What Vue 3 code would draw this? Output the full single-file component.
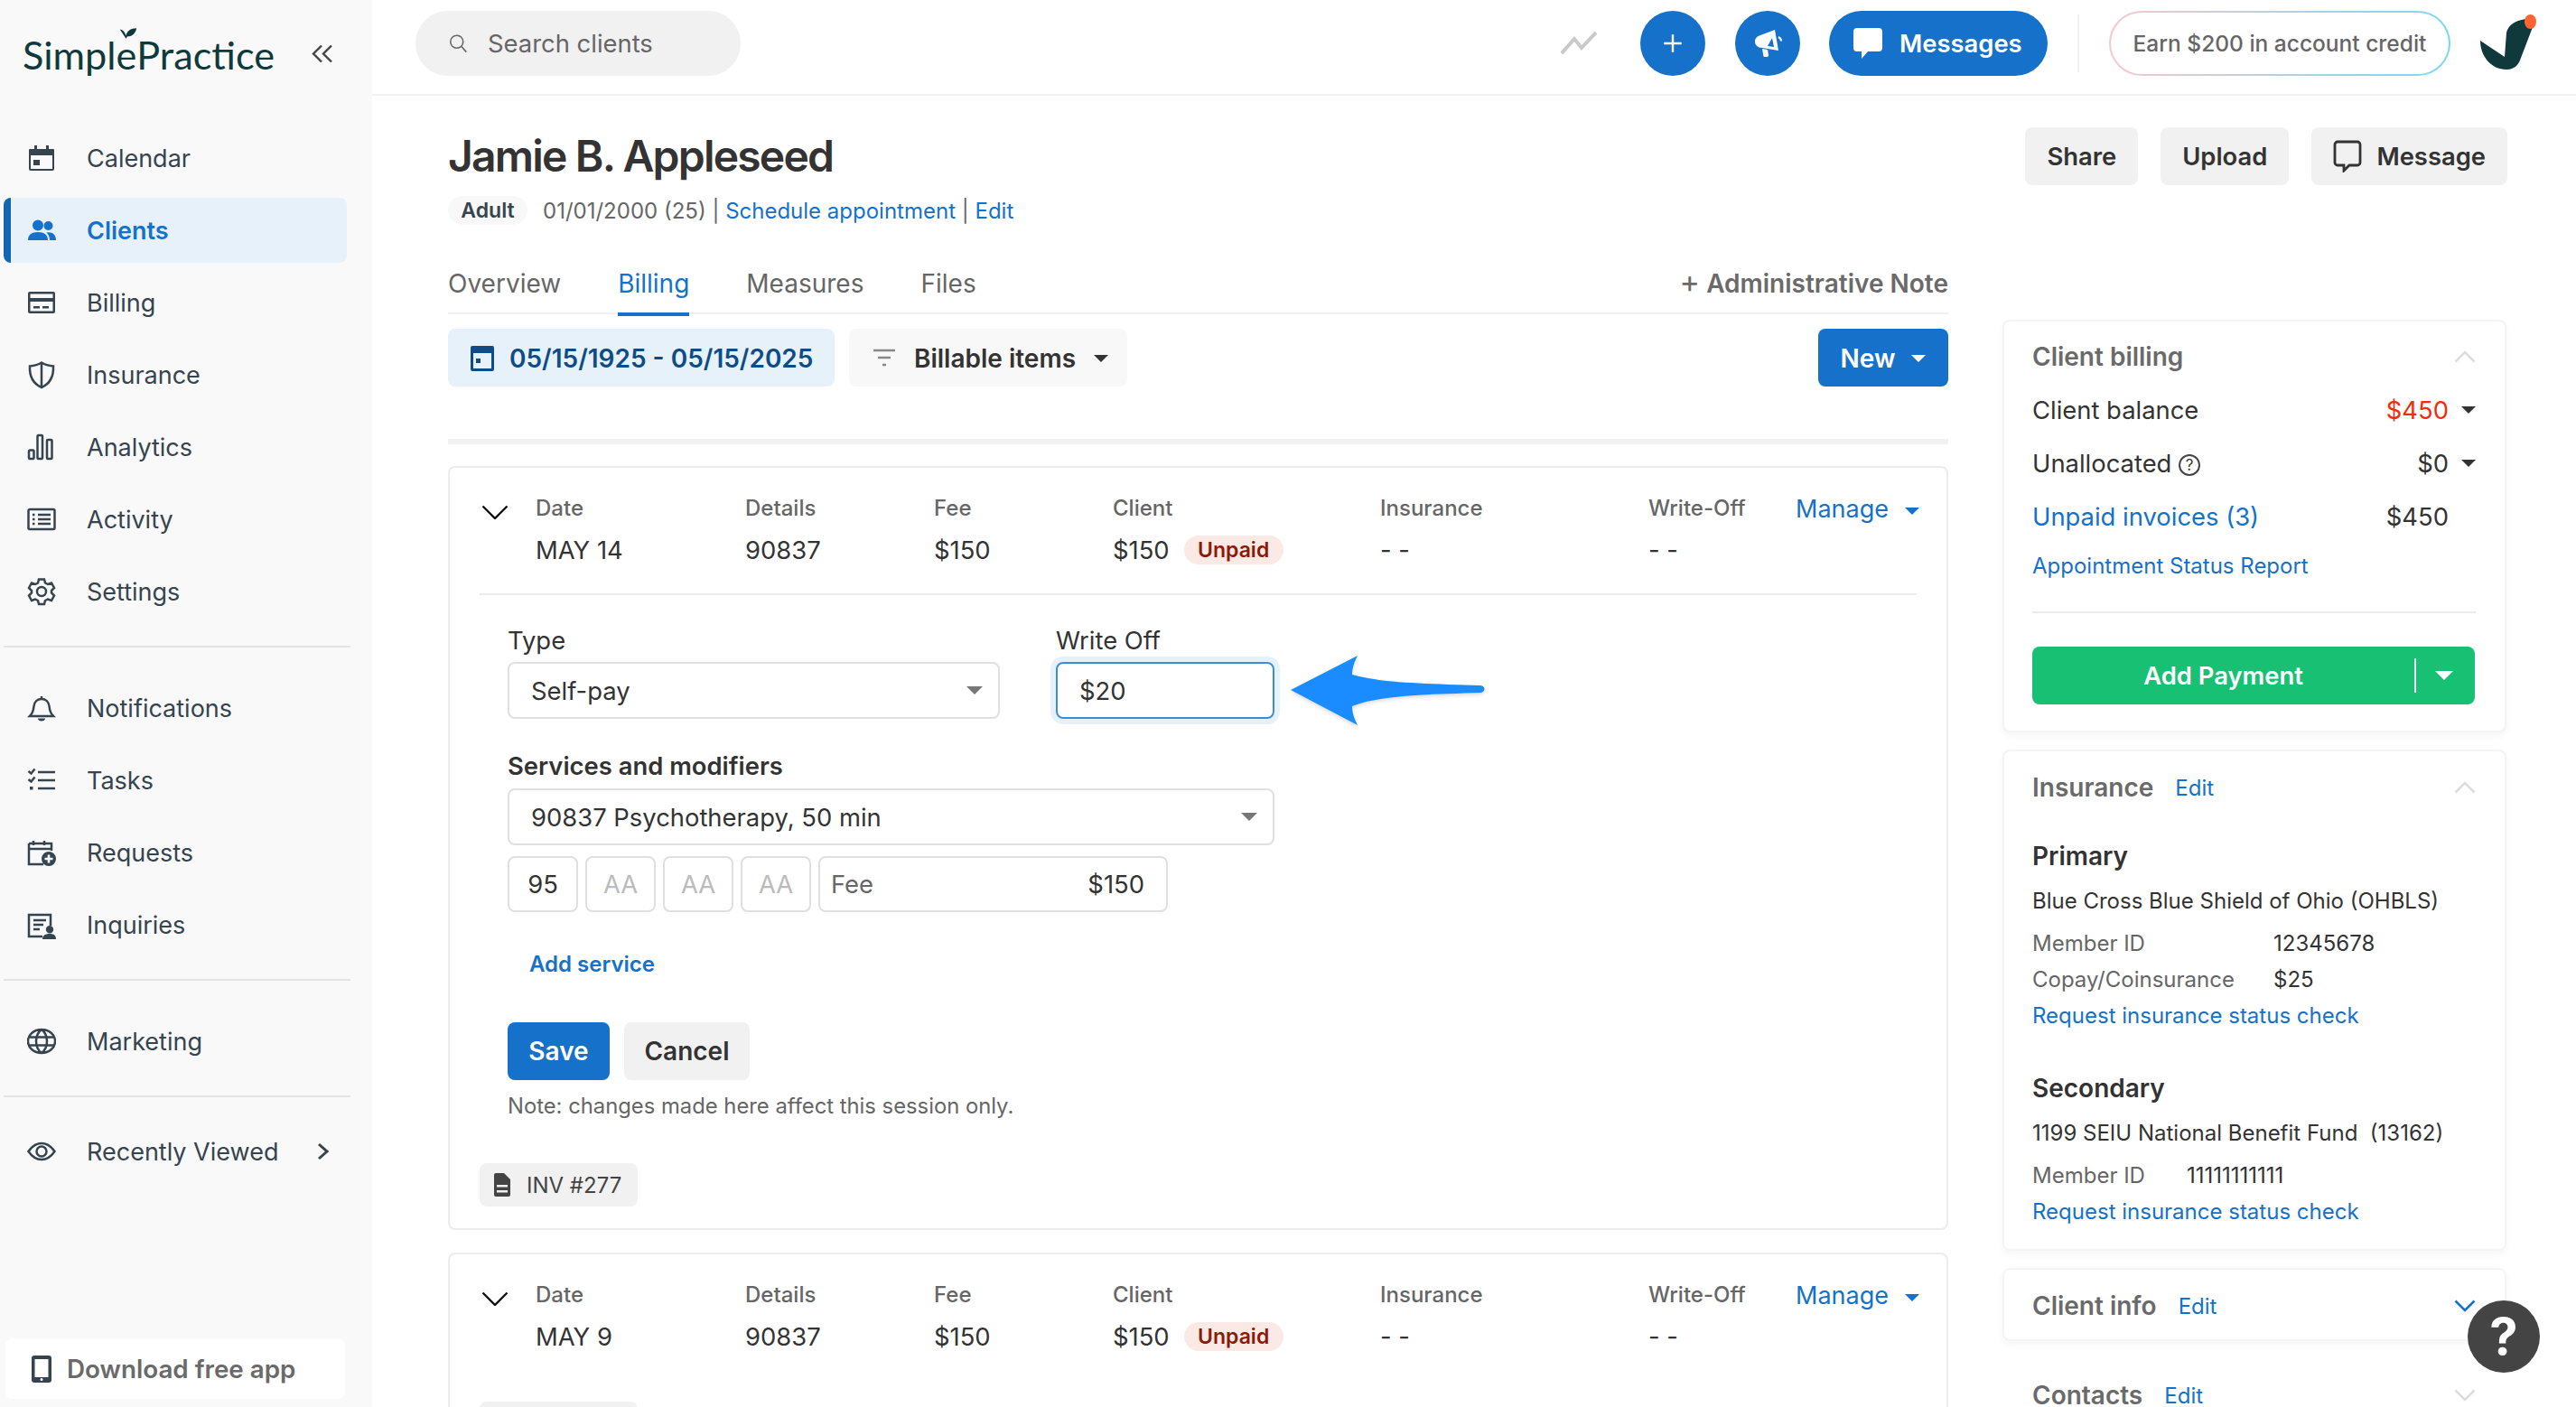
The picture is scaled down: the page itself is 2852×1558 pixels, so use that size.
<script setup>
const navGroups = [
  [
    { label: 'Calendar', icon: [
      { d: 'M3 6h26a1 1 0 0 1 1 1v21a2 2 0 0 1-2 2H4a2 2 0 0 1-2-2V7a1 1 0 0 1 1-1zM4 13v15h24V13z', fill: 1 },
      { d: 'M8 2h3v5H8zM21 2h3v5h-3zM7 18h7v6H7z', fill: 1 }
    ] },
    { label: 'Clients', active: true, icon: [
      { d: 'M12 4.500a6 6 0 1 1 0 12 6 6 0 0 1 0-12zM23.500 6a5 5 0 1 1 0 10 5 5 0 0 1 0-10zM1 27c0-6 4-9 11-9s11 3 11 9zM25 27c0-3.500-1-6-3.500-8.500 6-1.200 10.500 2 10.500 8.500z', fill: 1 }
    ] },
    { label: 'Billing', icon: [
      { d: 'M3 4h26a2 2 0 0 1 2 2v20a2 2 0 0 1-2 2H3a2 2 0 0 1-2-2V6a2 2 0 0 1 2-2zm.5 11v10.500h25V15zm0-8.500V11h25V6.500zM7 20h7v2.500H7zM17 20h7v2.500h-7z', fill: 1 }
    ] },
    { label: 'Insurance', icon: [
      { d: 'M16 2.500c4 2.500 8 3.500 13 4 .5 10-3 19-13 23.500C6 25.500 2.500 16.500 3 6.500c5-.5 9-1.500 13-4zM16 3v27', stroke: 1 }
    ] },
    { label: 'Analytics', icon: [
      { d: 'M3 19.500h3.500a1 1 0 0 1 1 1V28a1 1 0 0 1-1 1H3a1 1 0 0 1-1-1v-7.500a1 1 0 0 1 1-1zM12.500 3H16a1 1 0 0 1 1 1v24a1 1 0 0 1-1 1h-3.500a1 1 0 0 1-1-1V4a1 1 0 0 1 1-1zM23 8h3.500a1 1 0 0 1 1 1v19a1 1 0 0 1-1 1H23a1 1 0 0 1-1-1V9a1 1 0 0 1 1-1z', stroke: 1 }
    ] },
    { label: 'Activity', icon: [
      { d: 'M3 5h26a1.500 1.500 0 0 1 1.500 1.500v19A1.500 1.500 0 0 1 29 27H3a1.500 1.500 0 0 1-1.500-1.500v-19A1.500 1.500 0 0 1 3 5zM12 11h14M12 16h14M12 21h14M6 11h2.500M6 16h2.500M6 21h2.500', stroke: 1 }
    ] },
    { label: 'Settings', icon: [
      { d: 'M13 2.500h6l1 4 3 1.500 4-1.500 3 5.500-3 3v2.500l3 3-3 5.500-4-1.500-3 1.500-1 4h-6l-1-4-3-1.500-4 1.500-3-5.500 3-3V15l-3-3 3-5.500L9 8l3-1.500zM16 11a5 5 0 1 1 0 10 5 5 0 0 1 0-10z', stroke: 1 }
    ] }
  ],
  [
    { label: 'Notifications', icon: [
      { d: 'M3 25c3-3 4-6 4.500-11 .5-5 4-8 8.500-8s8 3 8.500 8c.5 5 1.500 8 4.500 11zM16 3v3', stroke: 1 },
      { d: 'M12 27.500h8c0 1.800-1.800 3-4 3s-4-1.200-4-3z', fill: 1 }
    ] },
    { label: 'Tasks', icon: [
      { d: 'M1.500 6l3 2.500 4-5M1.500 15l3 2.500 4-5M12 7h19M12 16h19M12 25h19', stroke: 1 },
      { d: 'M3 23h3.500v3.500H3z', fill: 1 }
    ] },
    { label: 'Requests', icon: [
      { d: 'M7 3v5M19 3v5M2 6h25v8M2 6v23h16M2 12h26', stroke: 1 },
      { d: 'M24 15a8 8 0 1 1 0 16 8 8 0 0 1 0-16zm-1.300 3.500v3.200h-3.200v2.600h3.200v3.200h2.600v-3.200h3.200v-2.600h-3.200v-3.200z', fill: 1 }
    ] },
    { label: 'Inquiries', icon: [
      { d: 'M17 29H2V5h24v12M7 11h14M7 16h11M7 21h7', stroke: 1 },
      { d: 'M25 17a4.200 4.200 0 1 1 0 8.400 4.200 4.200 0 0 1 0-8.400zM17 32c0-4 3-6 8-6s7 2 7 6z', fill: 1 }
    ] }
  ],
  [
    { label: 'Marketing', icon: [
      { d: 'M16 3c8.300 0 15 5.800 15 13s-6.700 13-15 13S1 23.200 1 16 7.700 3 16 3zM16 3c-4 3-6 8-6 13s2 10 6 13c4-3 6-8 6-13s-2-10-6-13zM1.500 11.500h29M1.500 20.500h29', stroke: 1 }
    ] }
  ],
  [
    { label: 'Recently Viewed', more: true, icon: [
      { d: 'M1.500 16C6 9.500 11 7 16 7s10 2.500 14.500 9C26 22.500 21 25 16 25S6 22.500 1.500 16zM16 10.500a5.500 5.500 0 1 1 0 11 5.500 5.500 0 0 1 0-11z', stroke: 1 }
    ] }
  ]
]

const modifiers = ['AA', 'AA', 'AA']

const sessions = [
  { date: 'MAY 14', expanded: true },
  { date: 'MAY 9', expanded: false }
]
</script>

<template>
  <div class="page">
    <aside class="sidebar">
      <div class="brand">
        <div class="logo">
          Simpl<span class="logo-e">e<svg class="logo-leaf" viewBox="0 0 24 16"><path d="M1 3c3 0 6 2 8 8 1-6 6-10 14-10-1 6-5 11-12 11l-2 3z" fill="#10393b" /></svg></span>Practice
        </div>
        <svg class="collapse" viewBox="0 0 24 21" fill="none" stroke="#444" stroke-width="2.400"><path d="M11 1.500 2 10.500l9 9M22 1.500l-9 9 9 9" /></svg>
      </div>

      <nav v-for="(group, i) in navGroups" :key="i" class="nav-group">
        <a v-for="item in group" :key="item.label" class="nav-item" :class="{ active: item.active }">
          <svg class="nav-icon" viewBox="0 0 32 32">
            <path
              v-for="(p, n) in item.icon"
              :key="n"
              :d="p.d"
              :fill="p.fill ? 'currentColor' : 'none'"
              :fill-rule="p.fill ? 'evenodd' : undefined"
              :stroke="p.stroke ? 'currentColor' : 'none'"
              :stroke-width="p.stroke ? 2.500 : undefined"
            />
          </svg>
          <span class="nav-label">{{ item.label }}</span>
          <svg v-if="item.more" class="nav-more" viewBox="0 0 14 20" fill="none" stroke="#3a4249" stroke-width="3"><path d="M2 2l9 8-9 8" /></svg>
        </a>
      </nav>

      <div class="download">
        <svg viewBox="0 0 24 32" class="download-icon"><path fill-rule="evenodd" d="M4 1h16a3 3 0 0 1 3 3v24a3 3 0 0 1-3 3H4a3 3 0 0 1-3-3V4a3 3 0 0 1 3-3zm.5 4v20h15V5zM12 26a1.500 1.500 0 1 0 0 3 1.500 1.500 0 0 0 0-3z" fill="#36444f" /></svg>
        Download free app
      </div>
    </aside>

    <div class="main">
      <header class="topbar">
        <div class="search">
          <svg viewBox="0 0 24 24" fill="none" stroke="#666" stroke-width="1.800"><circle cx="10" cy="10" r="8" /><path d="M16 16l6 7" /></svg>
          <span>Search clients</span>
        </div>
        <svg class="trend" viewBox="0 0 40 26" fill="none" stroke="#c9c9c9" stroke-width="4"><path d="M1 24 15 8l8 10L39 1" /></svg>
        <button class="round-btn">
          <svg class="plus-icon" viewBox="0 0 24 24" fill="none" stroke="#fff" stroke-width="2.200"><path d="M12 3v18M3 12h18" /></svg>
        </button>
        <button class="round-btn">
          <svg viewBox="0 0 32 32"><path d="M24 1l4 23-18-3c-5 0-8-3-8-7s3-6 6-7z" fill="#fff" /><path d="M21 10l2 10-7-1z" fill="#1571c9" /><path d="M10 22l6 1 1 6c0 1.500-1 2-2 2h-2c-1 0-1.500-.5-1.700-1.500z" fill="#fff" /><path d="M28 9c2 1 3 2.500 3 4.500" stroke="#fff" stroke-width="2" fill="none" /></svg>
        </button>
        <button class="messages-btn">
          <svg viewBox="0 0 34 36"><path d="M5 1h24a4 4 0 0 1 4 4v18a4 4 0 0 1-4 4H17l-7 8v-8H5a4 4 0 0 1-4-4V5a4 4 0 0 1 4-4z" fill="#fff" /></svg>
          Messages
        </button>
        <div class="topbar-rule"></div>
        <div class="earn">Earn $200 in account credit</div>
        <svg class="avatar" viewBox="0 0 64 64">
          <path d="M52 5C40 7 33 12 31 20L29 47 2 29c0 17 12 32 29 32 9 0 14-6 16-13L60 14z" fill="#10393b" />
          <ellipse cx="57.500" cy="8" rx="6.500" ry="8" fill="#ff6432" />
        </svg>
      </header>

      <div class="content">
        <section class="left">
          <div class="client-head">
            <h1>Jamie B. Appleseed</h1>
            <div class="meta">
              <span class="badge">Adult</span>
              <span>01/01/2000 (25) | <a>Schedule appointment</a> | <a>Edit</a></span>
            </div>
          </div>

          <div class="tabs">
            <a>Overview</a>
            <a class="current">Billing</a>
            <a>Measures</a>
            <a>Files</a>
            <a class="admin"><span class="admin-plus">+</span> Administrative Note</a>
          </div>

          <div class="filters">
            <button class="date-btn">
              <svg viewBox="0 0 28 32"><path fill-rule="evenodd" d="M3 2h22a2 2 0 0 1 2 2v24a2 2 0 0 1-2 2H3a2 2 0 0 1-2-2V4a2 2 0 0 1 2-2zm1 8v17h20V10zm3 6h5v5H7z" fill="#0e4c87" /></svg>
              05/15/1925 - 05/15/2025
            </button>
            <button class="items-btn">
              <svg viewBox="0 0 26 22" fill="none" stroke="#888" stroke-width="2.400"><path d="M1 2h24M6 10h14M11 18h4" /></svg>
              Billable items
              <i class="caret"></i>
            </button>
            <button class="new-btn">New <i class="caret"></i></button>
          </div>

          <div class="thick-rule"></div>

          <article v-for="s in sessions" :key="s.date" class="session">
            <div class="session-row">
              <svg class="row-chevron" viewBox="0 0 30 16" fill="none" stroke="#111" stroke-width="2.400"><path d="M1.500 1.500 15 15 28.500 1.500" /></svg>
              <div class="col"><label>Date</label><div>{{ s.date }}</div></div>
              <div class="col"><label>Details</label><div>90837</div></div>
              <div class="col"><label>Fee</label><div>$150</div></div>
              <div class="col"><label>Client</label><div>$150 <span class="unpaid">Unpaid</span></div></div>
              <div class="col"><label>Insurance</label><div>- -</div></div>
              <div class="col"><label>Write-Off</label><div>- -</div></div>
              <a class="manage">Manage <i class="caret blue"></i></a>
            </div>

            <div v-if="s.expanded" class="session-form">
              <div class="form-top">
                <div class="field type-field">
                  <label>Type</label>
                  <div class="select">Self-pay <i class="caret grey"></i></div>
                </div>
                <div class="field off-field">
                  <label>Write Off</label>
                  <div class="off-input">$20</div>
                  <svg class="pointer" viewBox="0 0 216 78"><path d="M0 38 74 0C70 8 68 14 68 21c30 9 80 10 142 12 6 1 6 7 0 8-62 2-112 3-142 15 0 7 2 13 6 21z" fill="#1a8cff" /></svg>
                </div>
              </div>

              <div class="services-label">Services and modifiers</div>
              <div class="select service-select">90837 Psychotherapy, 50 min <i class="caret grey"></i></div>
              <div class="modifiers">
                <div class="mod">95</div>
                <div v-for="(m, i) in modifiers" :key="i" class="mod empty">{{ m }}</div>
                <div class="fee-box"><span>Fee</span><b>$150</b></div>
              </div>
              <a class="add-service">Add service</a>
              <div class="form-actions">
                <button class="save">Save</button>
                <button class="cancel">Cancel</button>
              </div>
              <p class="note">Note: changes made here affect this session only.</p>
            </div>

            <div class="inv">
              <svg viewBox="0 0 20 28"><path fill-rule="evenodd" d="M3 1h9l7 7v17a2 2 0 0 1-2 2H3a2 2 0 0 1-2-2V3a2 2 0 0 1 2-2zm1 13v2.500h12V14zm0 6v2.500h12V20z" fill="#444" /></svg>
              INV #277
            </div>
          </article>
        </section>

        <aside class="right">
          <div class="head-actions">
            <button>Share</button>
            <button>Upload</button>
            <button>
              <svg viewBox="0 0 32 36" fill="none" stroke="#333" stroke-width="2.800"><path d="M5 2h22a3 3 0 0 1 3 3v20a3 3 0 0 1-3 3H18l-6 6v-6H5a3 3 0 0 1-3-3V5a3 3 0 0 1 3-3z" /></svg>
              Message
            </button>
          </div>

          <div class="panel billing-panel">
            <div class="panel-title"><h3>Client billing</h3><svg class="up" viewBox="0 0 24 14" fill="none" stroke="#ddd" stroke-width="2.600"><path d="M1.500 12.500 12 2l10.500 10.500" /></svg></div>
            <div class="bal-row"><span>Client balance</span><span class="red amount">$450 <i class="caret dark"></i></span></div>
            <div class="bal-row"><span>Unallocated <span class="qmark">?</span></span><span class="amount">$0 <i class="caret dark"></i></span></div>
            <div class="bal-row"><a>Unpaid invoices (3)</a><span class="amount plain">$450</span></div>
            <a class="status-link">Appointment Status Report</a>
            <div class="panel-rule"></div>
            <button class="pay-btn"><span>Add Payment</span><i class="caret white"></i></button>
          </div>

          <div class="panel insurance-panel">
            <div class="panel-title"><h3>Insurance</h3><a>Edit</a><svg class="up" viewBox="0 0 24 14" fill="none" stroke="#ddd" stroke-width="2.600"><path d="M1.500 12.500 12 2l10.500 10.500" /></svg></div>
            <h4>Primary</h4>
            <p class="payer">Blue Cross Blue Shield of Ohio (OHBLS)</p>
            <p class="kv"><span class="k wide">Member ID</span>12345678</p>
            <p class="kv"><span class="k wide">Copay/Coinsurance</span>$25</p>
            <a class="check">Request insurance status check</a>
            <h4 class="second">Secondary</h4>
            <p class="payer">1199 SEIU National Benefit Fund &nbsp;(13162)</p>
            <p class="kv"><span class="k">Member ID</span>11111111111</p>
            <a class="check">Request insurance status check</a>
          </div>

          <div class="panel info-panel">
            <div class="panel-title"><h3>Client info</h3><a>Edit</a><svg class="up" viewBox="0 0 24 14" fill="none" stroke="#1571c9" stroke-width="2.600"><path d="M1.500 1.500 12 12 22.500 1.500" /></svg></div>
          </div>

          <div class="contacts">
            <div class="panel-title"><h3>Contacts</h3><a>Edit</a><svg class="up" viewBox="0 0 24 14" fill="none" stroke="#ddd" stroke-width="2.600"><path d="M1.500 1.500 12 12 22.500 1.500" /></svg></div>
          </div>
        </aside>
      </div>
    </div>

    <button class="help">?</button>
  </div>
</template>

<style>
html, body {
  margin: 0;
  height: 1558px;
  overflow: hidden;
  background: #fff;
}
</style>

<style scoped>
.page {
  display: flex;
  width: 2852px;
  height: 1558px;
  overflow: hidden;
  position: relative;
  font-family: Inter, "Liberation Sans", sans-serif;
  font-size: 27.4px;
  color: #333;
}

a {
  color: #1571c9;
}

button {
  font-family: inherit;
  border: none;
  cursor: pointer;
}

h1, h3, h4, p {
  margin: 0;
}

/* sidebar */
.sidebar {
  width: 412px;
  flex: none;
  height: 1558px;
  box-sizing: border-box;
  background: #f9f9f9;
  display: flex;
  flex-direction: column;
  padding-left: 4px;
}

.brand {
  height: 139px;
  display: flex;
  align-items: flex-start;
  padding: 31px 0 0 21px;
  box-sizing: border-box;
}

.logo {
  font-family: Lato, "Open Sans", sans-serif;
  font-size: 43.2px;
  line-height: 58px;
  color: #10393b;
  width: 278px;
  white-space: nowrap;
}

.logo-e {
  position: relative;
}

.logo-leaf {
  position: absolute;
  left: 3px;
  top: -4px;
  width: 20px;
  height: 14px;
}

.collapse {
  width: 24px;
  height: 21px;
  margin: 18px 0 0 42px;
}

.nav-group {
  width: 384px;
  display: flex;
  flex-direction: column;
  gap: 8px;
  padding-bottom: 24px;
  margin-bottom: 31px;
  border-bottom: 2px solid #e4e4e4;
}

.nav-group:nth-of-type(3) {
  margin-bottom: 24px;
}

.nav-group:nth-of-type(4) {
  border-bottom: none;
  margin-bottom: 0;
}

.nav-item {
  width: 380px;
  box-sizing: border-box;
  height: 72px;
  display: flex;
  align-items: center;
  gap: 34px;
  padding-left: 18px;
  padding-right: 19px;
  border-left: 8px solid transparent;
  border-radius: 8px;
  color: #36444f;
  font-size: 27px;
}

.nav-item.active {
  background: #e7f1fa;
  border-left-color: #1466b4;
  color: #1571c9;
  font-weight: 600;
}

.nav-label {
  white-space: nowrap;
}

.nav-icon {
  width: 32px;
  height: 32px;
  flex: none;
}

.nav-more {
  width: 14px;
  height: 20px;
  flex: none;
  margin-left: auto;
}

.download {
  margin-top: auto;
  margin-bottom: 9px;
  margin-left: 2px;
  width: 376px;
  height: 67px;
  box-sizing: border-box;
  background: #fff;
  border-radius: 8px;
  display: flex;
  align-items: center;
  gap: 16px;
  padding-left: 28px;
  font-weight: 600;
  font-size: 27.8px;
  color: #6a6a6a;
}

.download-icon {
  width: 24px;
  height: 32px;
}

/* top bar */
.main {
  flex: 1;
  min-width: 0;
}

.topbar {
  height: 106px;
  box-sizing: border-box;
  border-bottom: 2px solid #f1f1f1;
  display: flex;
  align-items: center;
  padding: 0 44px 8px 48px;
}

.search {
  width: 360px;
  height: 72px;
  box-sizing: border-box;
  background: #f1f1f1;
  border-radius: 36px;
  display: flex;
  align-items: center;
  gap: 22px;
  padding-left: 37px;
  color: #666;
}

.search svg {
  width: 21px;
  height: 24px;
}

.trend {
  width: 40px;
  height: 26px;
  margin-left: auto;
}

.round-btn {
  width: 72px;
  height: 72px;
  border-radius: 50%;
  background: #1571c9;
  margin-left: 33px;
  padding: 0;
  display: flex;
  align-items: center;
  justify-content: center;
}

.round-btn svg {
  width: 32px;
  height: 32px;
}

.round-btn:first-of-type {
  margin-left: 48px;
}

.round-btn .plus-icon {
  width: 26px;
  height: 26px;
}

.messages-btn {
  width: 242px;
  height: 72px;
  border-radius: 36px;
  background: #1571c9;
  color: #fff;
  font-size: 27.4px;
  font-weight: 600;
  margin-left: 32px;
  display: flex;
  align-items: center;
  gap: 18px;
  padding: 0 0 0 26px;
}

.messages-btn svg {
  width: 34px;
  height: 36px;
}

.topbar-rule {
  width: 2px;
  height: 64px;
  background: #f1f1f1;
  margin: 0 33px;
}

.earn {
  width: 378px;
  height: 72px;
  box-sizing: border-box;
  border: 2px solid transparent;
  border-radius: 36px;
  background: linear-gradient(#fff, #fff) padding-box, linear-gradient(90deg, #f7c8cc, #7ad8f0) border-box;
  display: flex;
  align-items: center;
  justify-content: center;
  font-size: 24.500px;
  font-weight: 500;
  color: #666;
  white-space: nowrap;
}

.avatar {
  width: 64px;
  height: 64px;
  margin-left: 31px;
}

/* content */
.content {
  display: flex;
  padding-left: 84px;
  gap: 60px;
}

.left {
  width: 1661px;
  flex: none;
}

.client-head {
  height: 150px;
  padding-top: 37px;
  box-sizing: border-box;
}

h1 {
  font-size: 48px;
  line-height: 60px;
  font-weight: 600;
  letter-spacing: -1.800px;
  color: #333;
}

.meta {
  display: flex;
  align-items: center;
  gap: 17px;
  margin-top: 14px;
  font-size: 24px;
  color: #666;
}

.badge {
  width: 88px;
  height: 32px;
  border-radius: 16px;
  background: #f8f8f8;
  display: flex;
  align-items: center;
  justify-content: center;
  font-size: 23px;
  font-weight: 600;
  color: #36444f;
}

.tabs {
  display: flex;
  height: 92px;
  box-sizing: border-box;
  padding-top: 40px;
  border-bottom: 2px solid #f1f1f1;
  gap: 63px;
  color: #666;
  font-size: 28px;
}

.tabs a {
  color: #666;
  height: 52px;
  line-height: 36px;
}

.tabs a.current {
  color: #1571c9;
  box-shadow: 0 2px 0 #1571c9, inset 0 -2px 0 #1571c9;
}

.tabs a.admin {
  margin-left: auto;
  font-weight: 600;
  color: #6a6a6a;
}

.admin-plus {
  font-weight: 400;
  font-size: 34px;
  line-height: 30px;
}

.filters {
  display: flex;
  gap: 16px;
  margin-top: 16px;
}

.filters button {
  height: 64px;
  border-radius: 8px;
  font-size: 28px;
  font-weight: 600;
  display: flex;
  align-items: center;
  padding: 2px 0 0;
}

.date-btn {
  width: 428px;
  background: #e7f1fa;
  color: #0e4c87;
  gap: 16px;
  padding-left: 24px !important;
}

.date-btn svg {
  width: 28px;
  height: 32px;
}

.items-btn {
  width: 308px;
  background: #f8f8f8;
  color: #333;
  gap: 20px;
  padding-left: 26px !important;
}

.items-btn svg {
  width: 26px;
  height: 22px;
}

.caret {
  display: inline-block;
  width: 0;
  height: 0;
  border-left: 8px solid transparent;
  border-right: 8px solid transparent;
  border-top: 8px solid currentColor;
  vertical-align: middle;
}

.new-btn {
  width: 144px;
  margin-left: auto;
  background: #1571c9;
  color: #fff;
  justify-content: center;
  gap: 18px;
}

.thick-rule {
  height: 6px;
  background: #f1f1f1;
  margin: 58px 0 24px;
}

/* session card */
.session {
  border: 2px solid #ececec;
  border-radius: 8px;
  margin-bottom: 25px;
  padding: 0 33px;
  box-sizing: border-box;
}

.session-row {
  display: grid;
  grid-template-columns: 62px 232px 209px 198px 296px 297px 163px 1fr;
  padding: 25px 0 30px;
  border-bottom: 2px solid #ececec;
  height: 141px;
  box-sizing: border-box;
  position: relative;
}

.session:not(:first-of-type) .session-row {
  border-bottom: none;
}

.row-chevron {
  width: 30px;
  height: 16px;
  margin: 16px 0 0 2px;
}

.col label {
  display: block;
  font-size: 24px;
  font-weight: 500;
  line-height: 40px;
  color: #666;
  white-space: nowrap;
}

.col div {
  line-height: 40px;
  margin-top: 6px;
  white-space: nowrap;
  display: flex;
  align-items: center;
  gap: 16px;
}

.unpaid {
  height: 32px;
  width: 110px;
  border-radius: 16px;
  background: #fbe9e6;
  color: #8a1b07;
  font-size: 23px;
  font-weight: 600;
  display: flex;
  align-items: center;
  justify-content: center;
}

.manage {
  font-size: 27px;
  line-height: 42px;
  white-space: nowrap;
  justify-self: end;
  margin-right: 22px;
}

.manage .caret {
  margin-left: 10px;
}

.session-form {
  padding: 26px 0 0 31px;
}

.form-top {
  display: flex;
  gap: 62px;
}

.field label {
  display: block;
  line-height: 48px;
  color: #333;
}

.type-field {
  width: 545px;
}

.off-field {
  width: 242px;
  position: relative;
}

.select {
  height: 63px;
  box-sizing: border-box;
  border: 2px solid #e0e0e0;
  border-radius: 8px;
  display: flex;
  align-items: center;
  justify-content: space-between;
  padding: 0 17px 0 24px;
}

.caret.grey {
  color: #777;
  border-left-width: 9px;
  border-right-width: 9px;
  border-top-width: 9px;
}

.off-input {
  height: 63px;
  box-sizing: border-box;
  border: 2px solid #3d8bd9;
  border-radius: 8px;
  box-shadow: 0 0 0 6px #e7f1fa;
  display: flex;
  align-items: center;
  padding-left: 24px;
}

.pointer {
  position: absolute;
  left: calc(100% + 18px);
  top: 41px;
  width: 216px;
  height: 78px;
  filter: drop-shadow(0 2px 2px rgba(0, 0, 0, 0.15));
}

.services-label {
  font-weight: 600;
  line-height: 48px;
  margin-top: 28px;
}

.service-select {
  width: 849px;
  margin-top: 1px;
}

.modifiers {
  display: flex;
  gap: 8px;
  margin-top: 12px;
  height: 62px;
}

.mod {
  width: 78px;
  box-sizing: border-box;
  border: 2px solid #e0e0e0;
  border-radius: 8px;
  display: flex;
  align-items: center;
  justify-content: center;
}

.mod.empty {
  color: #bbb;
}

.fee-box {
  width: 387px;
  box-sizing: border-box;
  border: 2px solid #e0e0e0;
  border-radius: 8px;
  display: flex;
  align-items: center;
  justify-content: space-between;
  padding: 0 24px 0 12px;
  color: #666;
}

.fee-box b {
  font-weight: 400;
  color: #333;
}

.add-service {
  display: block;
  margin: 42px 0 0 24px;
  font-size: 24px;
  font-weight: 600;
  line-height: 32px;
}

.form-actions {
  display: flex;
  gap: 16px;
  margin-top: 48px;
}

.form-actions button {
  height: 64px;
  border-radius: 8px;
  font-size: 28px;
  font-weight: 600;
  padding: 0;
}

.save {
  width: 113px;
  background: #1571c9;
  color: #fff;
}

.cancel {
  width: 139px;
  background: #f1f1f1;
  color: #333;
}

.note {
  font-size: 23.8px;
  line-height: 32px;
  color: #666;
  margin-top: 13px;
}

.inv {
  width: 175px;
  height: 48px;
  box-sizing: border-box;
  background: #f1f1f1;
  border-radius: 8px;
  display: flex;
  align-items: center;
  gap: 16px;
  padding-left: 14px;
  font-size: 24px;
  color: #444;
  margin: 47px 0 24px;
}

.session:not(:first-of-type) .inv {
  margin-top: 22px;
}

.inv svg {
  width: 22px;
  height: 28px;
}

/* right column */
.right {
  width: 558px;
  flex: none;
}

.head-actions {
  display: flex;
  gap: 25px;
  justify-content: flex-end;
  margin: 35px 0 149px;
  margin-right: -1px;
}

.head-actions button {
  height: 64px;
  padding: 0 24px;
  background: #f1f1f1;
  border-radius: 8px;
  font-size: 27.4px;
  font-weight: 600;
  color: #333;
  display: flex;
  align-items: center;
  gap: 16px;
}

.head-actions svg {
  width: 32px;
  height: 36px;
}

.panel {
  background: #fff;
  border: 2px solid #f4f4f4;
  border-radius: 8px;
  box-sizing: border-box;
  padding: 0 32px 0 31px;
  margin-bottom: 19px;
  box-shadow: 0 4px 8px rgba(0, 0, 0, 0.04);
}

.billing-panel {
  height: 457px;
}

.billing-panel .panel-title {
  height: 68px;
  box-sizing: border-box;
  padding-top: 10px;
}

.insurance-panel {
  height: 555px;
}

.info-panel {
  height: 81px;
}

.panel-title {
  display: flex;
  align-items: center;
  gap: 24px;
  height: 80px;
  font-size: 24px;
}

.panel-title h3 {
  font-size: 28px;
  font-weight: 600;
  color: #6a6a6a;
}

.panel-title .up {
  width: 24px;
  height: 14px;
  margin-left: auto;
}

.bal-row {
  display: flex;
  justify-content: space-between;
  height: 59px;
  align-items: center;
}

.bal-row .amount {
  display: flex;
  align-items: center;
  gap: 14px;
}

.amount.plain {
  margin-right: 30px;
}

.caret.dark {
  color: #333;
}

.red {
  color: #ef2e0d;
}

.qmark {
  display: inline-flex;
  width: 24px;
  height: 24px;
  box-sizing: border-box;
  border: 2px solid #444;
  border-radius: 50%;
  align-items: center;
  justify-content: center;
  font-size: 17px;
  vertical-align: 2px;
}

.status-link {
  display: block;
  font-size: 24px;
  line-height: 32px;
  margin-top: 10px;
}

.panel-rule {
  height: 2px;
  background: #ececec;
  margin: 34px 0 37px;
}

.pay-btn {
  width: 490px;
  height: 64px;
  border-radius: 8px;
  background: #17c073;
  color: #fff;
  font-size: 27.4px;
  font-weight: 600;
  position: relative;
  display: flex;
  align-items: center;
  padding: 0;
}

.pay-btn span {
  width: 423px;
  height: 38px;
  line-height: 38px;
  border-right: 2px solid #fff;
  text-align: center;
  box-sizing: content-box;
}

.caret.white {
  margin-left: 21px;
  color: #fff;
  border-left-width: 10px;
  border-right-width: 10px;
  border-top-width: 10px;
}

h4 {
  font-size: 28px;
  font-weight: 600;
  line-height: 40px;
  margin-top: 16px;
}

h4.second {
  margin-top: 44px;
}

.payer {
  font-size: 24px;
  line-height: 32px;
  margin-top: 14px;
}

.kv {
  font-size: 24px;
  line-height: 32px;
  margin-top: 8px;
  display: flex;
}

.payer + .kv {
  margin-top: 15px;
}

.k {
  color: #666;
  width: 171px;
}

.k.wide {
  width: 267px;
}

.check {
  display: block;
  font-size: 24px;
  line-height: 32px;
  margin-top: 8px;
}

.contacts {
  padding: 0 34px 0 33px;
  margin-top: 20px;
}

.help {
  position: absolute;
  left: 2732px;
  top: 1440px;
  width: 80px;
  height: 80px;
  border-radius: 50%;
  background: #444;
  color: #fff;
  font-size: 56px;
  font-weight: 700;
  line-height: 80px;
  padding: 0;
}
</style>
